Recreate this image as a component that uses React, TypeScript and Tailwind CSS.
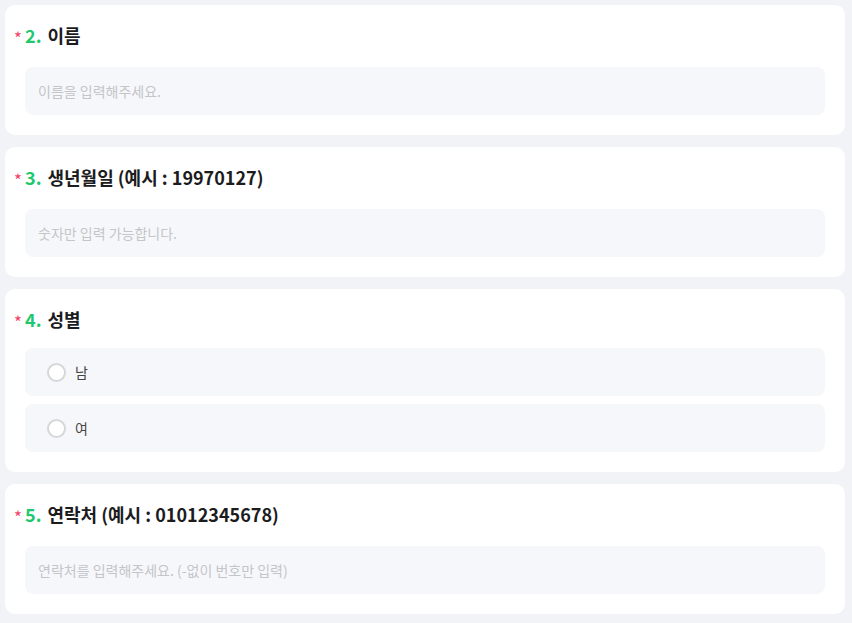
import React from "react";

type Q =
  | { no: number; title: string; kind: "text"; placeholder: string }
  | { no: number; title: string; kind: "radio"; options: string[] };

const questions: Q[] = [
  { no: 2, title: "이름", kind: "text", placeholder: "이름을 입력해주세요." },
  { no: 3, title: "생년월일 (예시 : 19970127)", kind: "text", placeholder: "숫자만 입력 가능합니다." },
  { no: 4, title: "성별", kind: "radio", options: ["남", "여"] },
  { no: 5, title: "연락처 (예시 : 01012345678)", kind: "text", placeholder: "연락처를 입력해주세요. (-없이 번호만 입력)" },
];

const Title = ({ no, title }: { no: number; title: string }) => (
  <div className="relative flex items-center h-6 text-[18px] font-bold leading-6 text-[#1c1c1e]">
    <span className="absolute -left-[11px] top-[3px] text-[17px] leading-6 font-normal text-[#f2446a]">*</span>
    <span className="text-[#1ec86f] mr-[6px]">{no}.</span>
    <span>{title}</span>
  </div>
);

export default function App() {
  return (
    <div
      className="min-h-[623px] bg-[#f2f3f6] pl-[5px] pr-[7px] pt-[5px] flex flex-col gap-3"
      style={{ fontFamily: '"Noto Sans CJK KR", "Noto Sans", sans-serif' }}
    >
      {questions.map((q) => (
        <div key={q.no} className="bg-white rounded-[10px] px-5 pt-[18px] pb-5">
          <Title no={q.no} title={q.title} />
          {q.kind === "text" ? (
            <input
              className="mt-[20px] w-full h-12 rounded-lg bg-[#f6f7fa] pl-[13px] text-[14px] text-[#333] placeholder:text-[#c4c5c9] outline-none"
              placeholder={q.placeholder}
            />
          ) : (
            <div className="mt-[17px] flex flex-col gap-2">
              {q.options.map((o) => (
                <label
                  key={o}
                  className="h-12 rounded-lg bg-[#f6f7fa] flex items-center pl-[22px] gap-[9px] cursor-pointer"
                >
                  <span className="w-[19px] h-[19px] rounded-full border-2 border-[#d6d7da] bg-white" />
                  <span className="text-[14px] text-[#444]">{o}</span>
                </label>
              ))}
            </div>
          )}
        </div>
      ))}
    </div>
  );
}
